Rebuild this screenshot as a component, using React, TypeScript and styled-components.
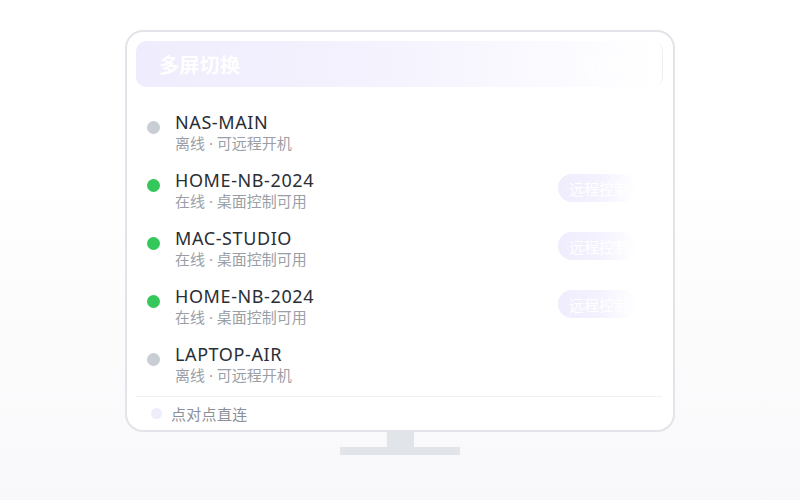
import React from "react";
import styled, { createGlobalStyle } from "styled-components";

type Device = {
  name: string;
  online: boolean;
};

const devices: Device[] = [
  { name: "NAS-MAIN", online: false },
  { name: "HOME-NB-2024", online: true },
  { name: "MAC-STUDIO", online: true },
  { name: "HOME-NB-2024", online: true },
  { name: "LAPTOP-AIR", online: false },
];

const GlobalStyle = createGlobalStyle`
  html, body {
    margin: 0;
    padding: 0;
  }
  body {
    font-family: "Noto Sans", "Noto Sans CJK SC", sans-serif;
  }
`;

const App = () => {
  return (
    <>
      <GlobalStyle />
      <Page>
        <Monitor>
          <Header>
            <HeaderTitle>多屏切换</HeaderTitle>
            <HeaderGhost>切换</HeaderGhost>
          </Header>
          <List>
            {devices.map((d, i) => (
              <Row key={i}>
                <Dot $online={d.online} />
                <Info>
                  <Name>{d.name}</Name>
                  <Status>
                    {d.online ? "在线 · 桌面控制可用" : "离线 · 可远程开机"}
                  </Status>
                </Info>
                {d.online && <ControlButton>远程控制</ControlButton>}
              </Row>
            ))}
          </List>
          <Footer>
            <FooterDot />
            <FooterText>点对点直连</FooterText>
          </Footer>
        </Monitor>
        <Neck />
        <Base />
      </Page>
    </>
  );
};

const Page = styled.div`
  width: 800px;
  height: 500px;
  box-sizing: border-box;
  padding-top: 30px;
  display: flex;
  flex-direction: column;
  align-items: center;
  background: linear-gradient(180deg, #ffffff 0%, #ffffff 35%, #f8f8fa 100%);
  overflow: hidden;
`;

const Monitor = styled.div`
  width: 550px;
  height: 402px;
  box-sizing: border-box;
  border: 2px solid #e2e4e9;
  border-radius: 18px;
  background: #fff;
  padding: 9px 9px 0 9px;
  display: flex;
  flex-direction: column;
  overflow: hidden;
`;

const Header = styled.div`
  height: 46px;
  flex-shrink: 0;
  border-radius: 10px;
  background: linear-gradient(90deg, #efecfd 0%, #f5f3fe 50%, #ffffff 100%);
  border-right: 1px solid #eceef2;
  margin-right: 1px;
  display: flex;
  align-items: center;
  justify-content: space-between;
  padding: 0 40px 0 23px;
`;

const HeaderTitle = styled.div`
  color: #ffffff;
  font-size: 20px;
  font-weight: 700;
  letter-spacing: 0.3px;
`;

const HeaderGhost = styled.div`
  color: rgba(255, 255, 255, 0.9);
  font-size: 20px;
  font-weight: 700;
`;

const List = styled.div`
  display: flex;
  flex-direction: column;
  padding-top: 16px;
  flex: 1;
`;

const Row = styled.div`
  height: 58px;
  display: flex;
  align-items: center;
  padding-left: 11px;
  padding-right: 28px;
`;

const Dot = styled.span<{ $online: boolean }>`
  width: 13px;
  height: 13px;
  border-radius: 50%;
  flex-shrink: 0;
  margin-top: -9px;
  background: ${(p) => (p.$online ? "#34c759" : "#c9cdd4")};
`;

const Info = styled.div`
  flex: 1;
  margin-left: 15px;
  display: flex;
  flex-direction: column;
`;

const Name = styled.div`
  font-size: 18px;
  line-height: 22px;
  letter-spacing: 0.6px;
  color: #2a2e35;
`;

const Status = styled.div`
  font-size: 15px;
  line-height: 21px;
  color: #9a9fa7;
`;

const ControlButton = styled.div`
  width: 78px;
  height: 28px;
  border-radius: 14px;
  box-sizing: border-box;
  padding-left: 11px;
  display: flex;
  align-items: center;
  color: #ffffff;
  font-size: 15px;
  white-space: nowrap;
  overflow: hidden;
  background: linear-gradient(90deg, #efecfd 0%, #f4f2fe 55%, #ffffff 100%);
  margin-top: -4px;
`;

const Footer = styled.div`
  height: 34px;
  flex-shrink: 0;
  border-top: 1px solid #eef0f3;
  display: flex;
  align-items: center;
  padding-left: 15px;
  padding-bottom: 1px;
  box-sizing: border-box;
  margin-right: 2px;
`;

const FooterDot = styled.span`
  width: 11px;
  height: 11px;
  border-radius: 50%;
  background: #efedfc;
`;

const FooterText = styled.span`
  margin-left: 9px;
  font-size: 15px;
  letter-spacing: 0.3px;
  color: #8b9098;
`;

const Neck = styled.div`
  width: 27px;
  height: 15px;
  background: #e1e4e8;
`;

const Base = styled.div`
  width: 120px;
  height: 8px;
  background: #e1e4e8;
`;

export default App;
